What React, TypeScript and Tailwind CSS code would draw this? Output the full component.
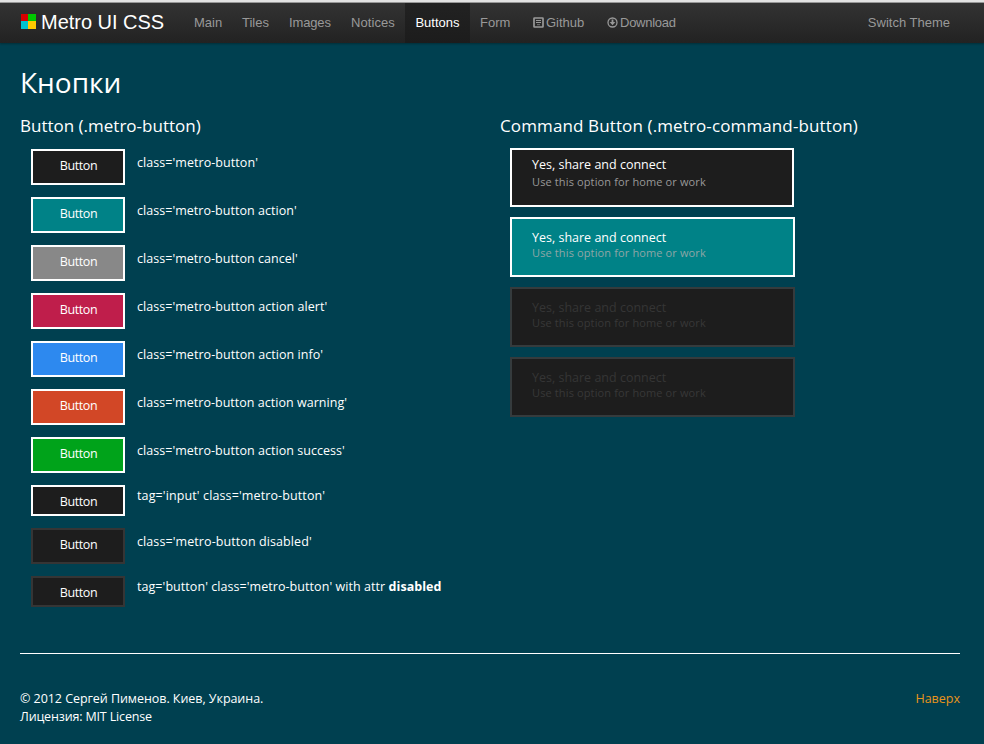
import React from "react";

const nav = [
  { label: "Main", cls: "w-[28px] ml-[30px]" },
  { label: "Tiles", cls: "w-[27px] ml-[20px]" },
  { label: "Images", cls: "w-[42px] ml-[20px] tracking-[-0.15px]" },
  { label: "Notices", cls: "w-[44px] ml-[20px] tracking-[0.08px]" },
];

type Row = { bg: string; border: string; size: string; pad: string; label: React.ReactNode; track: string };

const light = "border-white";
const dim = "border-[#353535]";
const tall = "h-[36px] pb-0.5";
const short = "h-[31px] pt-0.5";

const rows: Row[] = [
  { bg: "bg-[#1d1d1d]", border: light, size: tall, pad: "pt-[5px]", label: "class='metro-button'", track: "tracking-[0.06px]" },
  { bg: "bg-[#008287]", border: light, size: tall, pad: "pt-[5px]", label: "class='metro-button action'", track: "tracking-[0.04px]" },
  { bg: "bg-[#888888]", border: light, size: tall, pad: "pt-[5px]", label: "class='metro-button cancel'", track: "tracking-[0.04px]" },
  { bg: "bg-[#bf1e4b]", border: light, size: tall, pad: "pt-[5px]", label: "class='metro-button action alert'", track: "tracking-[0.05px]" },
  { bg: "bg-[#2d89ef]", border: light, size: tall, pad: "pt-[5px]", label: "class='metro-button action info'", track: "tracking-[0.05px]" },
  { bg: "bg-[#d24726]", border: light, size: tall, pad: "pt-[5px]", label: "class='metro-button action warning'", track: "tracking-[0.03px]" },
  { bg: "bg-[#00a31a]", border: light, size: tall, pad: "pt-[5px]", label: "class='metro-button action success'", track: "tracking-[0.04px]" },
  { bg: "bg-[#1d1d1d]", border: light, size: short, pad: "pt-0.5", label: "tag='input' class='metro-button'", track: "tracking-[0.12px]" },
  { bg: "bg-[#1d1d1d]", border: dim, size: tall, pad: "pt-[5px]", label: "class='metro-button disabled'", track: "tracking-[0.09px]" },
  {
    bg: "bg-[#1d1d1d]", border: dim, size: short, pad: "pt-0.5", track: "tracking-[0.06px]",
    label: <>tag='button' class='metro-button' with attr <b>disabled</b></>,
  },
];

const commands = [
  { box: "w-[284px] h-[59px] bg-[#1d1d1d] border-white pt-[6px]", title: "text-white", sub: "text-[#999999] -mt-px" },
  { box: "w-[285px] h-[60px] bg-[#008287] border-white pt-[10px]", title: "text-white", sub: "text-[#8fa6a6] -mt-[3px]" },
  { box: "w-[285px] h-[60px] bg-[#1d1d1d] border-[#353b3d] pt-[10px]", title: "text-[#353535]", sub: "text-[#383838] -mt-[3px]" },
  { box: "w-[285px] h-[60px] bg-[#1d1d1d] border-[#353b3d] pt-[10px]", title: "text-[#353535]", sub: "text-[#383838] -mt-[3px]" },
];

export default function App() {
  return (
    <div className="h-[744px] w-[984px] overflow-hidden bg-[#004050] font-['Open_Sans','Noto_Sans',sans-serif] text-[12.5px] leading-[18px] whitespace-nowrap text-white">
      <div className="h-[2px] bg-[#e3e3e3]" />
      <div className="h-px bg-[#9c9c9c]" />
      <header className="flex h-[40px] items-stretch bg-linear-to-b from-[#333333] to-[#222222] font-['Liberation_Sans',Arial,sans-serif] text-[13px] leading-[39px] text-[#999999] shadow-[0_1px_2px_rgba(0,0,0,0.3)]">
        <div className="flex w-[164px] pl-[21px] text-[20px] text-white">
          <span className="mt-[11px] grid size-[15px] shrink-0 grid-cols-[7px_8px] grid-rows-[7px_8px]">
            <i className="bg-[#d60000]" />
            <i className="bg-[#00c800]" />
            <i className="bg-[#00c3cf]" />
            <i className="bg-[#ffc800]" />
          </span>
          <span className="ml-[5px] tracking-[-0.03px]">Metro UI CSS</span>
        </div>
        {nav.map((n) => (
          <span key={n.label} className={n.cls}>{n.label}</span>
        ))}
        <span className="ml-[10px] w-[65px] bg-linear-to-b from-[#222222] to-[#1c1c1c] text-center text-white">Buttons</span>
        <span className="ml-[10px] w-[31px]">Form</span>
        <span className="ml-[22px] flex w-[52px]">
          <svg className="mt-[14px] mr-[2px] shrink-0" width="11" height="11" viewBox="0 0 11 11" fill="none" stroke="#999">
            <rect x="1" y="1" width="9" height="9" rx="0.4" strokeWidth="1.7" />
            <path d="M3 3.5h5" strokeWidth="1" />
            <path d="M3 5.5h5" strokeWidth="1" />
            <path d="M4 7.7h3" strokeWidth="1" strokeOpacity="0.7" />
          </svg>
          Github
        </span>
        <span className="ml-[22px] flex tracking-[-0.25px]">
          <svg className="mt-[14px] mr-[2px] shrink-0" width="11" height="11" viewBox="0 0 11 11" fill="none" stroke="#999" strokeWidth="1.3">
            <circle cx="5.5" cy="5.5" r="4.5" />
            <path d="M5.5 2.5v3" strokeWidth="1.8" />
            <path d="M2.7 5h5.6L5.5 8.2z" fill="#999" stroke="none" />
          </svg>
          Download
        </span>
        <span className="mr-[34px] ml-auto">Switch Theme</span>
      </header>

      <main className="mr-6 ml-5">
        <h1 className="h-[73px] pt-[20px] text-[28px] leading-[39px] font-normal">Кнопки</h1>
        <div className="flex h-[537px]">
          <section className="w-[480px]">
            <h2 className="h-[33px] text-[17px] leading-[20px] font-normal">Button (.metro-button)</h2>
            <div className="ml-[11px] flex flex-col gap-3">
              {rows.map((r, i) => (
                <div key={i} className="flex items-start gap-3">
                  <button className={`w-[94px] shrink-0 border-2 pl-px leading-[18px] tracking-[-0.4px] ${r.size} ${r.bg} ${r.border}`}>Button</button>
                  <span className={`${r.pad} ${r.track}`}>{r.label}</span>
                </div>
              ))}
            </div>
          </section>
          <section>
            <h2 className="h-[32px] text-[17px] leading-[20px] font-normal tracking-[0.12px]">Command Button (.metro-command-button)</h2>
            <div className="ml-[10px] flex flex-col gap-[10px]">
              {commands.map((c, i) => (
                <div key={i} className={`border-2 pl-5 ${c.box}`}>
                  <div className={c.title}>Yes, share and connect</div>
                  <div className={`text-[11px] tracking-[0.13px] ${c.sub}`}>Use this option for home or work</div>
                </div>
              ))}
            </div>
          </section>
        </div>
        <footer className="flex justify-between border-t border-white pt-9">
          <div>
            <div className="tracking-[-0.05px]">© 2012 Сергей Пименов. Киев, Украина.</div>
            <div className="tracking-[-0.15px]">Лицензия: MIT License</div>
          </div>
          <a className="text-[#e8941a]">Наверх</a>
        </footer>
      </main>
    </div>
  );
}
